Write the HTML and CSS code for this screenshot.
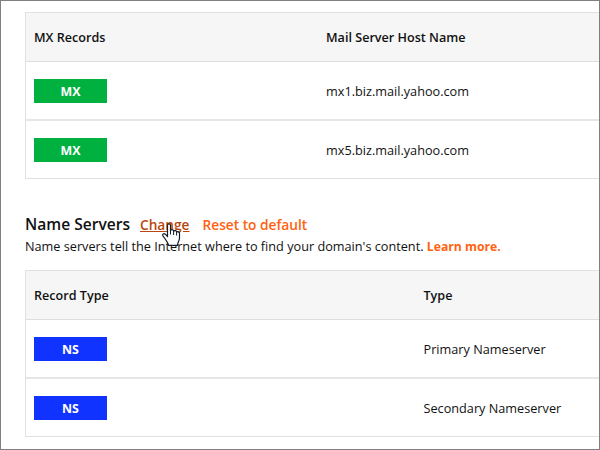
FILE: index.html
```
<!DOCTYPE html>
<html lang="en">
<head>
<meta charset="utf-8">
<title>Domain DNS</title>
<link rel="stylesheet" href="styles.css">
</head>
<body>
<main class="panel">
  <section class="records records-mx">
    <div class="row head"><span>MX Records</span><span class="h-host">Mail Server Host Name</span></div>
    <div class="row"><span class="badge mx">MX</span><span class="host">mx1.biz.mail.yahoo.com</span></div>
    <div class="row"><span class="badge mx">MX</span><span class="host">mx5.biz.mail.yahoo.com</span></div>
  </section>
  <div class="title-row">
    <h2>Name Servers</h2>
    <a class="change">Change<svg class="pointer" width="19" height="24" viewBox="0 0 19 24"><path d="M5.500 2.200C5.500.500 8.500.500 8.500 2.200V7.500C9.200 6.300 11.500 6.500 11.700 8.100 12.600 7.100 14.500 7.500 14.700 9 15.900 8.200 17.500 9 17.500 10.500V15C17.500 18 15.500 19 15.500 22.300H6.500C6.500 19.800 4.500 18.500 3.200 16L.9 12.800C0 11.200 1.800 10 3.300 11.200L5.500 13.500Z" fill="#fff" stroke="#111c2c" stroke-width="1.200" stroke-linejoin="round"/><path d="M8.500 7V11.500M11.600 8V12M14.600 9V12.500" fill="none" stroke="#111c2c"/></svg></a>
    <a class="reset">Reset to default</a>
  </div>
  <p class="note"><span class="note-text">Name servers tell the Internet where to find your domain's content.</span> <a class="learn">Learn more.</a></p>
  <section class="records records-ns">
    <div class="row head"><span>Record Type</span><span>Type</span></div>
    <div class="row"><span class="badge ns">NS</span><span class="type">Primary Nameserver</span></div>
    <div class="row"><span class="badge ns">NS</span><span class="type">Secondary Nameserver</span></div>
  </section>
</main>
</body>
</html>
```
FILE: styles.css
```
* { box-sizing: border-box; }
body {
  margin: 0;
  background: #fff;
  color: #111;
  font: 12.7px/18px "Open Sans", sans-serif;
}
.panel {
  height: 450px;
  padding: 11px 0 0 24px;
  border: 1px solid #808080;
  overflow: hidden;
}
.records {
  border: 1px solid #e1e1e1;
  border-right: 0;
}
.row {
  display: grid;
  grid-template-columns: 292px 1fr;
  align-items: center;
  height: 59px;
  padding-left: 8px;
  border-bottom: 2px solid #e6e6e6;
}
.records-ns .row { grid-template-columns: 389.5px 1fr; }
.row:last-child { height: 57px; border-bottom: 0; }
.row.head {
  height: 49px;
  padding-top: 1px;
  border-bottom: 1px solid #dedede;
  background: #f6f6f6;
  font-size: 12.6px;
  font-weight: 600;
}
.badge {
  width: 73px;
  height: 24px;
  color: #fff;
  font-size: 12.4px;
  font-weight: 700;
  line-height: 25px;
  text-align: center;
}
.mx { background: #00b140; }
.ns { background: #1133ff; }
.title-row {
  display: flex;
  align-items: baseline;
  height: 24px;
  margin-top: 33px;
  font-size: 13.7px;
  line-height: 24px;
  font-weight: 600;
}
h2 {
  width: 115px;
  margin: 0;
  font-size: 15.6px;
  font-weight: 600;
  white-space: nowrap;
}
.change {
  position: relative;
  width: 62.5px;
  color: #b8460e;
  text-decoration: underline;
}
.pointer {
  position: absolute;
  left: 22px;
  top: 10px;
}
.reset, .learn { color: #ff6210; }
.note {
  height: 18px;
  margin: 1px 0 15px;
  white-space: nowrap;
}
.learn { font-size: 12.2px; font-weight: 700; }
```
